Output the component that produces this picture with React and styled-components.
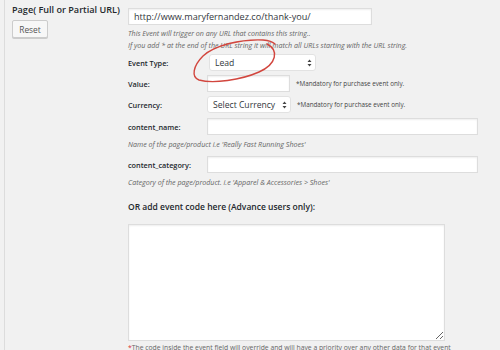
import React from "react";
import styled, { createGlobalStyle } from "styled-components";

const Global = createGlobalStyle`
	html, body {
		margin: 0;
		padding: 0;
		background: #f1f1f1;
		font-family: "Open Sans", "Noto Sans", sans-serif;
		color: #23282d;
		overflow: hidden;
	}
`;

const Frame = styled.div`
	position: relative;
	margin-left: 4px;
	border-left: 1px solid #dcdcdc;
	height: 350px;
	padding-left: 7px;
	display: grid;
	grid-template-columns: 116px 1fr;
	box-sizing: border-box;
`;

const Side = styled.div`
	padding-top: 3px;
	display: flex;
	flex-direction: column;
	align-items: flex-start;
`;

const Heading = styled.div`
	font-size: 9.1px;
	font-weight: 600;
	line-height: 14px;
	white-space: nowrap;
`;

const Button = styled.button`
	margin-top: 3px;
	width: 36px;
	height: 18px;
	padding: 0;
	background: #f7f7f7;
	border: 1px solid #cccccc;
	border-radius: 2px;
	box-shadow: 0 1px 0 #cccccc;
	font-family: inherit;
	font-size: 8.4px;
	color: #555555;
`;

const Main = styled.div`
	padding-top: 8px;
	display: flex;
	flex-direction: column;
	align-items: flex-start;
`;

const TextInput = styled.div`
	box-sizing: border-box;
	width: ${(p) => p.$width}px;
	height: 17px;
	background: #ffffff;
	border: 1px solid #dddddd;
	box-shadow: inset 0 1px 2px rgba(0, 0, 0, 0.07);
	font-size: 9.1px;
	line-height: 15px;
	padding-left: 5px;
	color: #32373c;
	white-space: nowrap;
`;

const Help = styled.div`
	margin-top: ${(p) => p.$top || 3}px;
	font-size: 7.1px;
	font-style: italic;
	line-height: 12px;
	color: #666666;
	white-space: nowrap;
`;

const Row = styled.div`
	margin-top: ${(p) => p.$top}px;
	display: flex;
	align-items: center;
`;

const Label = styled.div`
	width: 79px;
	font-size: 7.3px;
	font-weight: 600;
	color: #23282d;
	white-space: nowrap;
`;

const Select = styled.div`
	box-sizing: border-box;
	width: ${(p) => p.$width}px;
	height: 17px;
	margin-left: ${(p) => p.$shift || 0}px;
	display: flex;
	align-items: center;
	justify-content: space-between;
	padding: 0 3px 0 5px;
	background: #ffffff;
	border: 1px solid #e2e2e2;
	border-radius: 3px;
	font-size: 8.6px;
	color: #32373c;
	white-space: nowrap;
`;

const Note = styled.div`
	margin-left: 6px;
	font-size: 6.3px;
	color: #444444;
	white-space: nowrap;
`;

const Section = styled.div`
	margin-top: 12px;
	font-size: 8.5px;
	font-weight: 600;
	line-height: 14px;
	white-space: nowrap;
`;

const CodeArea = styled.textarea`
	box-sizing: border-box;
	margin-top: 10px;
	width: 317px;
	height: 117px;
	background: #ffffff;
	border: 1px solid #dddddd;
	box-shadow: inset 0 1px 2px rgba(0, 0, 0, 0.07);
	resize: both;
	outline: none;
`;

const Foot = styled.div`
	margin-top: 1px;
	font-size: 6.8px;
	line-height: 12px;
	color: #666666;
	white-space: nowrap;
	span {
		color: #dc3232;
	}
`;

const Scribble = styled.svg`
	position: absolute;
	left: 184px;
	top: 36px;
	width: 94px;
	height: 50px;
	pointer-events: none;
`;

const Arrows = () => (
	<svg width="5" height="8" viewBox="0 0 5 8">
		<path d="M2.5 0.5 L4.5 3 L0.5 3 Z M2.5 7.5 L4.5 5 L0.5 5 Z" fill="#444" />
	</svg>
);

const App = () => {
	return (
		<>
			<Global />
			<Frame>
				<Side>
					<Heading>Page( Full or Partial URL)</Heading>
					<Button type="button">Reset</Button>
				</Side>
				<Main>
					<TextInput $width={244}>http://www.maryfernandez.co/thank-you/</TextInput>
					<Help $top={2}>
						This Event will trigger on any URL that contains this string..
						<br />
						If you add * at the end of the URL string it will match all URLs starting with the URL string.
					</Help>
					<Row $top={3}>
						<Label>Event Type:</Label>
						<Select $width={107} $shift={2}>
							Lead
							<Arrows />
						</Select>
					</Row>
					<Row $top={4}>
						<Label>Value:</Label>
						<TextInput $width={83} />
						<Note>*Mandatory for purchase event only.</Note>
					</Row>
					<Row $top={4}>
						<Label>Currency:</Label>
						<Select $width={84}>
							Select Currency
							<Arrows />
						</Select>
						<Note>*Mandatory for purchase event only.</Note>
					</Row>
					<Row $top={5}>
						<Label>content_name:</Label>
						<TextInput $width={271} />
					</Row>
					<Help>Name of the page/product i.e 'Really Fast Running Shoes'</Help>
					<Row $top={6}>
						<Label>content_category:</Label>
						<TextInput $width={271} />
					</Row>
					<Help>Category of the page/product. i.e 'Apparel &amp; Accessories &gt; Shoes'</Help>
					<Section>OR add event code here (Advance users only):</Section>
					<CodeArea />
					<Foot>
						<span>*</span>The code inside the event field will override and will have a priority over any other data for that event
					</Foot>
				</Main>
				<Scribble viewBox="0 0 94 50">
					<path
						d="M78 8 C 90 14, 88 28, 70 36 C 52 44, 24 48, 10 44 C 2 41, 4 30, 14 20 C 26 9, 52 3, 74 4 C 80 4.5, 84 6, 86 8"
						fill="none"
						stroke="#d2463e"
						strokeWidth="1.4"
						strokeLinecap="round"
					/>
				</Scribble>
			</Frame>
		</>
	);
};

export default App;
